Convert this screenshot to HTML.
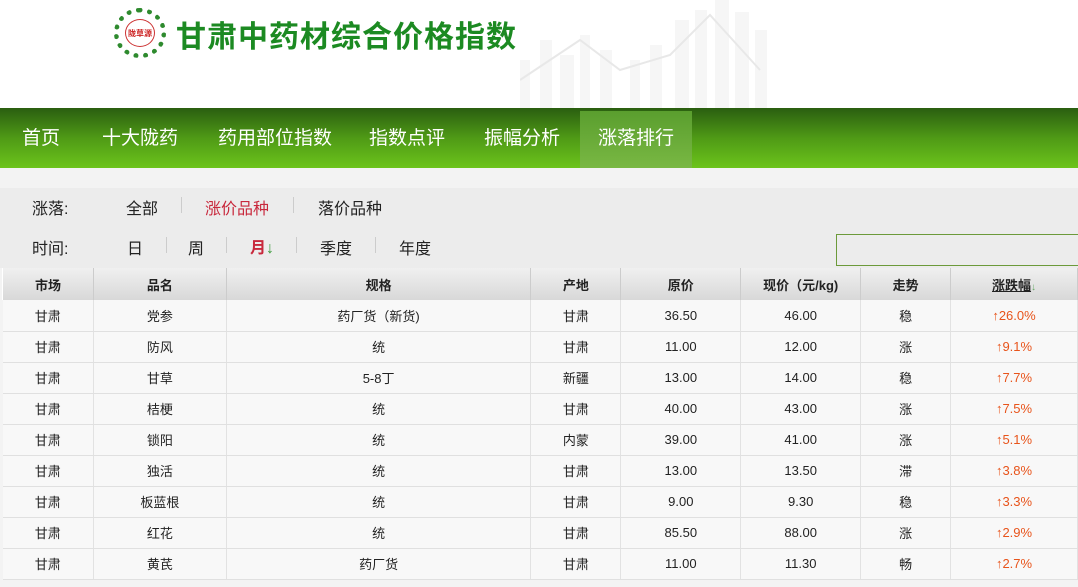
<!DOCTYPE html>
<html><head><meta charset="utf-8"><style>
*{margin:0;padding:0;box-sizing:border-box}
body{width:1078px;height:587px;overflow:hidden;background:#f3f3f3;font-family:"Liberation Sans","Noto Sans CJK SC",sans-serif;position:relative}
.hdr{position:absolute;left:0;top:0;width:1078px;height:108px;background:#fff}
.logo{position:absolute;left:114px;top:8px;width:52px;height:50px;border-radius:50%;border:5px dotted #2e8a2e;}
.logo i{position:absolute;left:6px;top:6px;width:30px;height:28px;border-radius:50%;background:#fff;border:1px solid #c33;font-style:normal;font-size:8px;color:#c22;text-align:center;line-height:28px;font-weight:bold}
.title{position:absolute;left:176px;top:12px;font-size:30px;font-weight:bold;color:#1c8a22;letter-spacing:1px;font-family:"Noto Sans CJK SC",sans-serif}
.nav{position:absolute;left:0;top:108px;width:1078px;height:60px;background:linear-gradient(#2a5e10,#4f9a16 50%,#6cc41b)}
.nav span{position:absolute;top:1px;height:60px;line-height:60px;color:#fff;font-size:19px}
.nav .act{background:linear-gradient(#5a9e2e,#79b843);top:3px;height:57px;line-height:56px;width:112px;text-align:center}
.panel{position:absolute;left:0;top:188px;width:1078px;height:80px;background:#ececec}
.f{position:absolute;font-size:16px;color:#222}
.sep{position:absolute;width:1px;height:16px;background:#ccc}
.inp{position:absolute;left:836px;top:234px;width:250px;height:32px;border:1px solid #6c9a3a;background:#ececec}
table{position:absolute;left:2px;top:268px;border-collapse:collapse;font-size:13px;color:#222}
th{height:32px;background:linear-gradient(#f0f0f0,#d8d8d8);font-weight:bold;border-left:1px solid #fff;border-right:1px solid #ccc}
td{height:31px;text-align:center;background:#f8f8f8;border-bottom:1px solid #e0e0e0;border-right:1px solid #e2e2e2}
.u{color:#e8541b}
</style></head><body>
<div class="hdr">
<svg style="position:absolute;left:520px;top:0" width="260" height="108"><g fill="#f6f6f6"><rect x="0" y="60" width="10" height="48"/><rect x="20" y="40" width="12" height="68"/><rect x="40" y="55" width="14" height="53"/><rect x="60" y="35" width="10" height="73"/><rect x="80" y="50" width="12" height="58"/><rect x="110" y="60" width="10" height="48"/><rect x="130" y="45" width="12" height="63"/><rect x="155" y="20" width="14" height="88"/><rect x="175" y="10" width="12" height="98"/><rect x="195" y="0" width="14" height="108"/><rect x="215" y="12" width="14" height="96"/><rect x="235" y="30" width="12" height="78"/></g><polyline points="0,80 60,40 100,70 150,55 190,15 240,70" fill="none" stroke="#e8e8e8" stroke-width="2"/></svg>
<div class="logo"><i>陇草源</i></div>
<div class="title">甘肃中药材综合价格指数</div>
</div>
<div class="nav">
<span style="left:22px">首页</span><span style="left:102px">十大陇药</span><span style="left:218px">药用部位指数</span><span style="left:369px">指数点评</span><span style="left:484px">振幅分析</span><span class="act" style="left:580px">涨落排行</span>
</div>
<div class="panel"></div>
<div class="f" style="left:32px;top:195px">涨落:</div>
<div class="f" style="left:126px;top:195px">全部</div><div class="sep" style="left:181px;top:197px"></div>
<div class="f" style="left:205px;top:195px;color:#c8283c">涨价品种</div><div class="sep" style="left:293px;top:197px"></div>
<div class="f" style="left:318px;top:195px">落价品种</div>
<div class="f" style="left:32px;top:235px">时间:</div>
<div class="f" style="left:127px;top:235px">日</div><div class="sep" style="left:166px;top:237px"></div>
<div class="f" style="left:188px;top:235px">周</div><div class="sep" style="left:226px;top:237px"></div>
<div class="f" style="left:250px;top:234px;color:#c8283c;font-weight:bold">月<span style="color:#3a9a3a;font-weight:normal">↓</span></div><div class="sep" style="left:296px;top:237px"></div>
<div class="f" style="left:320px;top:235px">季度</div><div class="sep" style="left:375px;top:237px"></div>
<div class="f" style="left:399px;top:235px">年度</div>
<div class="inp"></div>
<table>
<tr><th style="width:91px">市场</th><th style="width:133px">品名</th><th style="width:305px">规格</th><th style="width:90px">产地</th><th style="width:120px">原价</th><th style="width:120px">现价（元/kg)</th><th style="width:90px">走势</th><th style="width:127px"><u>涨跌幅</u><span style="color:#6a6;font-size:10px">↓</span></th></tr>
<tr><td>甘肃</td><td>党参</td><td>药厂货（新货)</td><td>甘肃</td><td>36.50</td><td>46.00</td><td>稳</td><td class="u">↑26.0%</td></tr>
<tr><td>甘肃</td><td>防风</td><td>统</td><td>甘肃</td><td>11.00</td><td>12.00</td><td>涨</td><td class="u">↑9.1%</td></tr>
<tr><td>甘肃</td><td>甘草</td><td>5-8丁</td><td>新疆</td><td>13.00</td><td>14.00</td><td>稳</td><td class="u">↑7.7%</td></tr>
<tr><td>甘肃</td><td>桔梗</td><td>统</td><td>甘肃</td><td>40.00</td><td>43.00</td><td>涨</td><td class="u">↑7.5%</td></tr>
<tr><td>甘肃</td><td>锁阳</td><td>统</td><td>内蒙</td><td>39.00</td><td>41.00</td><td>涨</td><td class="u">↑5.1%</td></tr>
<tr><td>甘肃</td><td>独活</td><td>统</td><td>甘肃</td><td>13.00</td><td>13.50</td><td>滞</td><td class="u">↑3.8%</td></tr>
<tr><td>甘肃</td><td>板蓝根</td><td>统</td><td>甘肃</td><td>9.00</td><td>9.30</td><td>稳</td><td class="u">↑3.3%</td></tr>
<tr><td>甘肃</td><td>红花</td><td>统</td><td>甘肃</td><td>85.50</td><td>88.00</td><td>涨</td><td class="u">↑2.9%</td></tr>
<tr><td>甘肃</td><td>黄芪</td><td>药厂货</td><td>甘肃</td><td>11.00</td><td>11.30</td><td>畅</td><td class="u">↑2.7%</td></tr>
</table>
</body></html>
